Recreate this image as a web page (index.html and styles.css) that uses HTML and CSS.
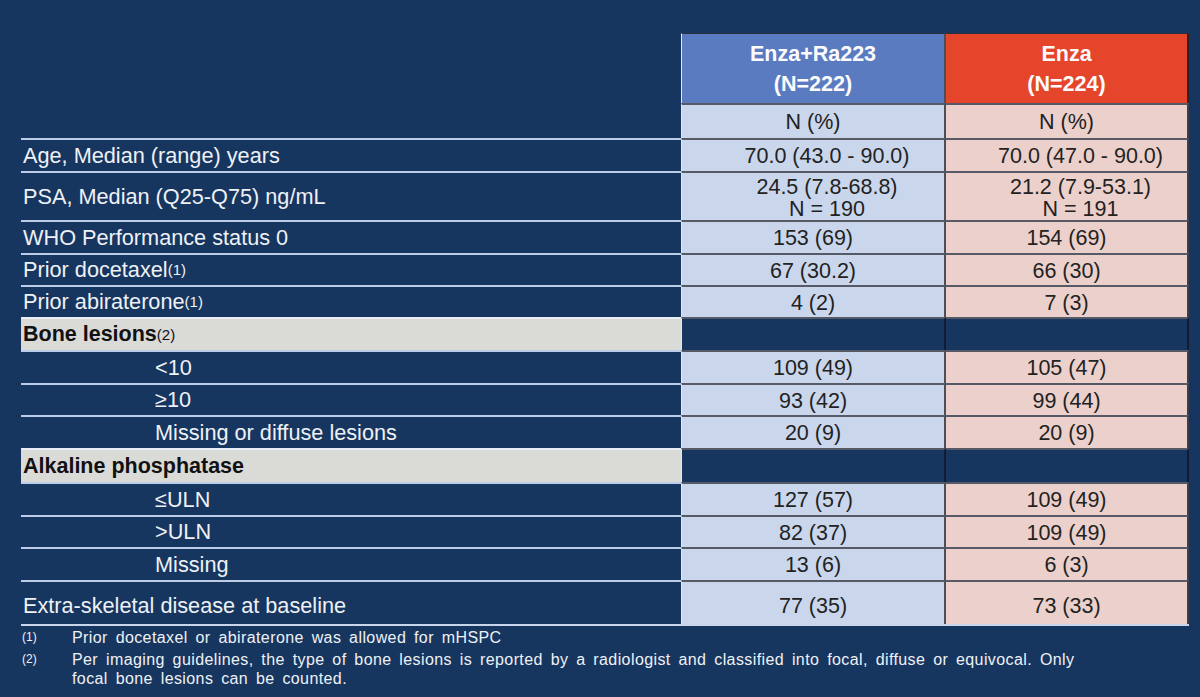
FILE: index.html
```html
<!DOCTYPE html>
<html>
<head>
<meta charset="utf-8">
<link rel="stylesheet" href="styles.css">
</head>
<body>
<div class="slide">
  <div class="table">
    <div class="row r-head">
      <div class="lab none"></div>
      <div class="c cb hd">Enza+Ra223<br>(N=222)</div>
      <div class="c cr hd">Enza<br>(N=224)</div>
    </div>
    <div class="row r-n">
      <div class="lab none"></div>
      <div class="c cb">N (%)</div>
      <div class="c cr">N (%)</div>
    </div>
    <div class="row r-33">
      <div class="lab">Age, Median (range) years</div>
      <div class="c cb shift">70.0 (43.0 - 90.0)</div>
      <div class="c cr shift">70.0 (47.0 - 90.0)</div>
    </div>
    <div class="row r-psa">
      <div class="lab">PSA, Median (Q25-Q75) ng/mL</div>
      <div class="c cb two shift">24.5 (7.8-68.8)<br>N = 190</div>
      <div class="c cr two shift">21.2 (7.9-53.1)<br>N = 191</div>
    </div>
    <div class="row r-33">
      <div class="lab">WHO Performance status 0</div>
      <div class="c cb">153 (69)</div>
      <div class="c cr">154 (69)</div>
    </div>
    <div class="row r-32">
      <div class="lab">Prior docetaxel<sup>(1)</sup></div>
      <div class="c cb">67 (30.2)</div>
      <div class="c cr">66 (30)</div>
    </div>
    <div class="row r-32">
      <div class="lab">Prior abiraterone<sup>(1)</sup></div>
      <div class="c cb">4 (2)</div>
      <div class="c cr">7 (3)</div>
    </div>
    <div class="row r-33 grp">
      <div class="lab gray">Bone lesions<sup>(2)</sup></div>
      <div class="c dark cbd"></div>
      <div class="c dark"></div>
    </div>
    <div class="row r-33">
      <div class="lab ind">&lt;10</div>
      <div class="c cb">109 (49)</div>
      <div class="c cr">105 (47)</div>
    </div>
    <div class="row r-32">
      <div class="lab ind">≥10</div>
      <div class="c cb">93 (42)</div>
      <div class="c cr">99 (44)</div>
    </div>
    <div class="row r-33">
      <div class="lab ind">Missing or diffuse lesions</div>
      <div class="c cb">20 (9)</div>
      <div class="c cr">20 (9)</div>
    </div>
    <div class="row r-34 grp">
      <div class="lab gray">Alkaline phosphatase</div>
      <div class="c dark cbd"></div>
      <div class="c dark"></div>
    </div>
    <div class="row r-33">
      <div class="lab ind">≤ULN</div>
      <div class="c cb">127 (57)</div>
      <div class="c cr">109 (49)</div>
    </div>
    <div class="row r-32">
      <div class="lab ind">&gt;ULN</div>
      <div class="c cb">82 (37)</div>
      <div class="c cr">109 (49)</div>
    </div>
    <div class="row r-33">
      <div class="lab ind">Missing</div>
      <div class="c cb">13 (6)</div>
      <div class="c cr">6 (3)</div>
    </div>
    <div class="row r-last">
      <div class="lab low">Extra-skeletal disease at baseline</div>
      <div class="c cb low">77 (35)</div>
      <div class="c cr low">73 (33)</div>
    </div>
  </div>
  <div class="notes">
    <div class="note"><span class="mk">(1)</span><span class="nt">Prior docetaxel or abiraterone was allowed for mHSPC</span></div>
    <div class="note"><span class="mk">(2)</span><span class="nt">Per imaging guidelines, the type of bone lesions is reported by a radiologist and classified into focal, diffuse or equivocal. Only<br>focal bone lesions can be counted.</span></div>
  </div>
</div>
</body>
</html>
```

FILE: styles.css
```css
html, body {
  margin: 0;
  padding: 0;
  background: #17365f;
}
.slide {
  width: 1200px;
  height: 697px;
  background: #17365f;
  font-family: "Liberation Sans", Arial, sans-serif;
  overflow: hidden;
  padding-top: 33px;
  box-sizing: border-box;
}
.table {
  margin-left: 21px;
  width: 1168px;
  border-bottom: 2px solid #c9d5ea;
}
.row {
  display: grid;
  grid-template-columns: 660px 265px 243px;
}
.r-head { height: 70px; }
.r-n { height: 35px; }
.r-33 { height: 33px; }
.r-32 { height: 32px; }
.r-34 { height: 34px; }
.r-psa { height: 49px; }
.r-last { height: 44px; }

.lab {
  box-sizing: border-box;
  border-top: 2px solid #bccde8;
  color: #eef1f6;
  font-size: 21.7px;
  display: flex;
  align-items: center;
  padding-left: 2px;
  white-space: nowrap;
}
.lab.none { border-top: none; }
.lab.ind { padding-left: 134px; }
.lab.gray {
  background: #dadad7;
  color: #111;
  font-weight: bold;
  border-top: 2px solid #e8edf4;
  font-size: 21.5px;
}
sup {
  font-size: 15px;
  font-weight: normal;
  vertical-align: 7px;
  line-height: 0;
}

.c {
  box-sizing: border-box;
  border-top: 2px solid #555a66;
  font-size: 21.5px;
  color: #222;
  display: flex;
  align-items: center;
  justify-content: center;
  text-align: center;
  line-height: 22px;
  padding-top: 1px;
}
.c.shift { padding-left: 28px; }
.c.low, .lab.low { padding-top: 5px; }
.cb {
  background: #cad6ec;
  border-left: 1px solid #e3e9f3;
  border-right: 2px solid #4d4f58;
}
.cr {
  background: #ecd0cb;
  border-right: 2px solid #3c3f4a;
}
.c.two { padding-top: 2px; }
.c.hd {
  color: #fbfbfd;
  font-weight: bold;
  font-size: 21.5px;
  line-height: 30px;
  border-top: 1px solid #2a2f40;
  padding-top: 0;
}
.cb.hd { background: #5b7bc1; }
.cr.hd { background: #e4452b; border-right: 2px solid #3a1f1f; }
.c.dark {
  background: #17365f;
  border-right: 2px solid #111c33;
}
.c.dark.cbd { border-left: 1px solid #e3e9f3; }

.notes {
  margin-top: 2px;
  padding-left: 22px;
  color: #eef1f6;
}
.note {
  display: flex;
  font-size: 16px;
  line-height: 19px;
  margin-bottom: 3px;
}
.mk {
  width: 50px;
  font-size: 12px;
  flex: none;
}
.nt {
  letter-spacing: 0.4px;
  word-spacing: 3px;
}
```
